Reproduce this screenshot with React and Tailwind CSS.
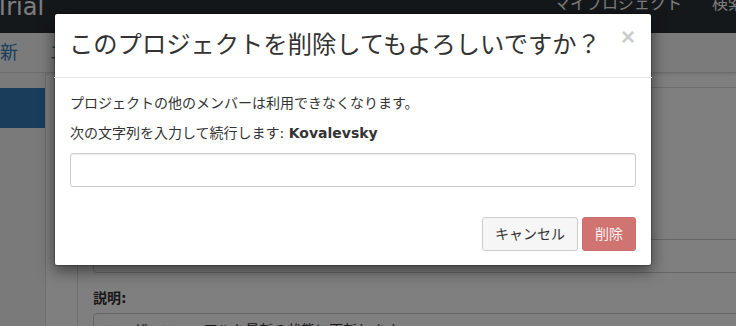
export default function App() {
  return (
    <div className="relative w-[736px] h-[326px] overflow-hidden bg-white text-[#333] font-['DejaVu_Sans','Noto_Sans_CJK_JP',sans-serif]">
      {/* navbar */}
      <div className="h-[33px] bg-[#2a3036] flex justify-between items-start overflow-hidden">
        <div className="ml-[-5px] mt-[-5px] text-[24px] leading-[24px] text-[#fafafa]">Trial</div>
        <div className="flex mt-[-4px] mr-[-23px] text-[16px] leading-[16px] text-[#fafafa]">
          <span className="px-[15px]">マイプロジェクト</span>
          <span className="px-[15px]">検索</span>
        </div>
      </div>

      {/* sub header */}
      <div className="h-[40px] bg-[#f6f6f6] border-b border-[#d8d8d8] shadow-[0_1px_3px_rgba(0,0,0,0.15)] flex items-center text-[18px] leading-[20px] text-[#337ab7]">
        <span>新</span>
        <span className="ml-[32px]">エ</span>
      </div>

      {/* main */}
      <div className="flex">
        <div className="w-[46px] h-[260px] shrink-0 bg-[#f5f5f5] border-r border-[#dddddd] pt-[15px]">
          <div className="h-[40px] bg-[#337ab7]" />
        </div>
        <div className="pl-[31px] pt-[14px]">
          <div className="w-[720px] h-[300px] bg-white border border-[#dddddd] px-[15px] pt-[15px]">
            <div className="h-[136px]" />
            <div className="h-[34px] border border-[#cccccc] rounded-[4px] bg-white" />
            <div className="mt-[15px] mb-[5px] text-[14px] leading-[20px] font-bold">説明:</div>
            <div className="border border-[#cccccc] rounded-[4px] px-[12px] py-[6px] text-[14px] leading-[20px]">
              ユーザーマニュアルを最新の状態に更新します。
            </div>
          </div>
        </div>
      </div>

      {/* backdrop */}
      <div className="absolute inset-0 bg-black/50" />

      {/* modal */}
      <div className="absolute left-[54px] top-[13px] w-[598px] bg-white rounded-[3px] border border-black/20 shadow-[0_5px_15px_rgba(0,0,0,0.5)] bg-clip-padding">
        <div className="flex items-start justify-between px-[15px] py-[15px] border-b border-[#e5e5e5] -m-px mb-0">
          <h4 className="m-0 text-[24.3px] leading-[34px] font-normal text-[#333]">
            このプロジェクトを削除してもよろしいですか？
          </h4>
          <button className="mt-[-3px] mr-[2px] text-[24px] leading-[24px] font-bold text-black opacity-20 font-['Liberation_Sans',sans-serif]">
            ×
          </button>
        </div>
        <div className="px-[15px] pt-[15px] pb-[15px] text-[14px] leading-[20px]">
          <p className="mb-[10px]">プロジェクトの他のメンバーは利用できなくなります。</p>
          <p className="mb-[10px]">
            次の文字列を入力して続行します: <strong className="font-bold">Kovalevsky</strong>
          </p>
          <div className="h-[34px] border border-[#cccccc] rounded-[3px] shadow-[inset_0_1px_1px_rgba(0,0,0,0.075)]" />
        </div>
        <div className="flex justify-end gap-[4px] px-[15px] pt-[15px] pb-[14px]">
          <button className="h-[34px] px-[12px] text-[14px] leading-[20px] bg-[#f6f6f6] border border-[#cccccc] rounded-[3px] text-[#333]">
            キャンセル
          </button>
          <button className="h-[34px] px-[12px] text-[14px] leading-[20px] bg-[#cf7471] border border-[#cc6e6b] rounded-[3px] text-[#fdf0f0]">
            削除
          </button>
        </div>
      </div>
    </div>
  );
}
